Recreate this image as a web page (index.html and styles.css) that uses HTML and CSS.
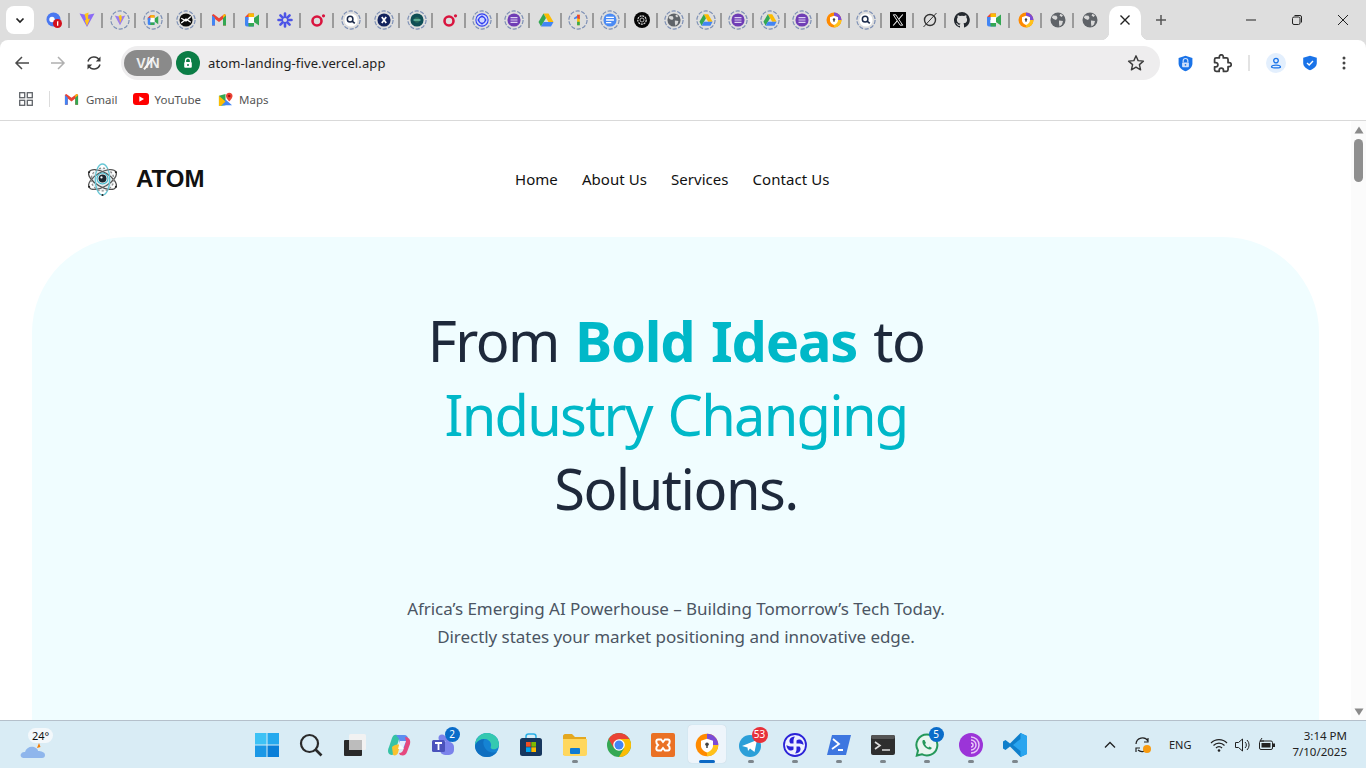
FILE: index.html
```html
<!DOCTYPE html>
<html lang="en">
<head>
<meta charset="utf-8">
<title>ATOM</title>
<link rel="stylesheet" href="styles.css">
</head>
<body>
<svg class="defs" width="0" height="0" aria-hidden="true">
  <defs>
    <symbol id="ring" viewBox="0 0 22 22"><circle cx="11" cy="11" r="10" fill="none" stroke="#7c8fb5" stroke-width="1.300" stroke-dasharray="4.600 1.700"/></symbol>
    <symbol id="meet" viewBox="0 0 16 16"><path d="M1 5 4.500 1.500H10V5H4.500V8H1Z" fill="#ea4335"/><path d="M1 8H4.500V11H10V14.500H3C1.900 14.500 1 13.600 1 12.500Z" fill="#4285f4"/><path d="M4.500 1.500H9C9.600 1.500 10 2 10 2.500V5H4.500Z" fill="#fbbc04"/><path d="M10 5V11H4.500V14.500H9C9.600 14.500 10 14 10 13.500V10L15 13.500V2.500L10 6Z" fill="#34a853"/><rect x="4.500" y="5" width="5.500" height="6" fill="#fff"/><path d="M1 5H4.500V8H1Z" fill="#4285f4"/></symbol>
    <symbol id="drive" viewBox="0 0 16 16"><path d="M5.500 1.500H10.500L15.500 10H10.500Z" fill="#fbbc04"/><path d="M5.500 1.500 .5 10 3 14.500 8 6Z" fill="#34a853"/><path d="M5.500 10H15.500L13 14.500H3Z" fill="#4285f4"/></symbol>
    <symbol id="listp" viewBox="0 0 16 16"><circle cx="8" cy="8" r="7.500" fill="#6f3db5"/><path d="M4 5.200H12M4 8H12M4 10.800H12" stroke="#dcd0f2" stroke-width="1.400"/></symbol>
    <symbol id="redo" viewBox="0 0 16 16"><circle cx="7" cy="9" r="4.500" fill="none" stroke="#d9143e" stroke-width="2.600"/><circle cx="13.500" cy="3.800" r="1.600" fill="#d9143e"/></symbol>
    <symbol id="globe" viewBox="0 0 16 16"><circle cx="8" cy="8" r="7.500" fill="#5f6368"/><path d="M3 3.500 6.500 3.800 7.500 6 6 8 3.500 7 1.800 5.500ZM9 8.500 13 9 12 12.500 9.500 14.500 9 11.500Z M10.500 1.800 13 3.500 11.500 5 9.500 3.500Z" fill="#d9d9d9"/></symbol>
    <symbol id="lens" viewBox="0 0 16 16"><circle cx="8" cy="8" r="7.500" fill="#fff"/><circle cx="7" cy="7" r="3.200" fill="none" stroke="#1b2a4a" stroke-width="1.700"/><path d="M9.300 9.300 12.300 11.800" stroke="#1b2a4a" stroke-width="2"/></symbol>
    <symbol id="shield" viewBox="0 0 16 16"><circle cx="8" cy="8" r="7.500" fill="#ff8a00"/><path d="M8 .5A7.500 7.500 0 0 1 15.500 8H12A4 4 0 0 0 8 4Z" fill="#7b4bd6"/><path d="M15.500 8A7.500 7.500 0 0 1 8 15.500V12A4 4 0 0 0 12 8Z" fill="#ffc21a"/><path d="M8 3.800 12 5.200V8.500C12 10.700 10 12.300 8 13 6 12.300 4 10.700 4 8.500V5.200Z" fill="#fff"/><circle cx="8" cy="7.500" r="1.200" fill="#444"/><path d="M7.500 8H8.500V10H7.500Z" fill="#444"/></symbol>
  </defs>
</svg>

<div class="tabstrip">
  <button class="tab-menu" aria-label="Tabs"><svg viewBox="0 0 12 12" class="i12"><path d="M2.500 4.500 6 8 9.500 4.500" fill="none" stroke="#222" stroke-width="1.700"/></svg></button>
  <div class="tabs">
    <span class="fav"><svg viewBox="0 0 16 16" class="i16"><circle cx="7.500" cy="7.500" r="7" fill="#4a78f0"/><circle cx="6" cy="7.500" r="2.700" fill="#fff"/><circle cx="11.500" cy="11.500" r="4.500" fill="#d3101c"/><path d="M11 9.500 12.300 9V13.800H11Z" fill="#fff"/></svg></span>
    <span class="fav"><svg viewBox="0 0 16 16" class="i16"><path d="M.5 1.500 8 3 15.500 1.500 8 15Z" fill="#8c6bf5"/><path d="M9.500 .5 5.500 2 7 7.500 5.800 8.500 8 14 11 6.500 9 7Z" fill="#ffc517"/></svg></span>
    <span class="fav ring"><svg class="r22"><use href="#ring"/></svg><svg viewBox="0 0 16 16" class="in12"><path d="M1 2 8 3.500 15 2 8 15Z" fill="#9b7cf0"/><path d="M9.500 1 6 2.500 7.500 8 8 12 10.500 6Z" fill="#ffc517"/></svg></span>
    <span class="fav ring"><svg class="r22"><use href="#ring"/></svg><svg class="in12"><use href="#meet"/></svg></span>
    <span class="fav ring"><svg class="r22"><use href="#ring"/></svg><svg viewBox="0 0 16 16" class="in16"><circle cx="8" cy="8" r="7.500" fill="#0b0b0b"/><path d="M2.500 6 8 9 13.500 4M2.500 11.500 8 7 13.500 10.500" stroke="#fff" stroke-width="1.500" fill="none"/></svg></span>
    <span class="fav"><svg class="i16" viewBox="0 0 16 16"><path d="M1 3V13.500H4V7L8 10 12 7V13.500H15V3L13.500 2 8 6.200 2.500 2Z" fill="#ea4335"/><path d="M1 3.200V13.500H4V6Z" fill="#4285f4"/><path d="M15 3.200V13.500H12V6Z" fill="#34a853"/><path d="M12 6 15 3.200 13.500 2 12 3.200Z" fill="#fbbc04"/></svg></span>
    <span class="fav"><svg class="i16"><use href="#meet"/></svg></span>
    <span class="fav"><svg class="i16" viewBox="0 0 16 16"><g stroke="#4d55e6" stroke-width="2.600" stroke-linecap="round"><path d="M8 1.500V14.500M1.500 8H14.500M3.400 3.400 12.600 12.600M12.600 3.400 3.400 12.600"/></g><circle cx="8" cy="8" r="2" fill="#dedede"/></svg></span>
    <span class="fav"><svg class="i16"><use href="#redo"/></svg></span>
    <span class="fav ring"><svg class="r22"><use href="#ring"/></svg><svg class="in16"><use href="#lens"/></svg></span>
    <span class="fav ring"><svg class="r22"><use href="#ring"/></svg><svg viewBox="0 0 16 16" class="in16"><circle cx="8" cy="8" r="7.500" fill="#13235e"/><path d="M5.500 4.500 10.500 11.500M10.500 4.500 5.500 11.500" stroke="#fff" stroke-width="2" fill="none"/></svg></span>
    <span class="fav ring"><svg class="r22"><use href="#ring"/></svg><svg viewBox="0 0 16 16" class="in16"><circle cx="8" cy="8" r="7.500" fill="#0f4f55"/><circle cx="8" cy="8" r="3.200" fill="#2b6a5c"/><path d="M4 8H12" stroke="#9fd" stroke-width="1"/></svg></span>
    <span class="fav"><svg class="i16"><use href="#redo"/></svg></span>
    <span class="fav ring"><svg class="r22"><use href="#ring"/></svg><svg viewBox="0 0 16 16" class="in16"><circle cx="8" cy="8" r="7" fill="#cfd6ff" stroke="#2f3df0" stroke-width="1.200"/><path d="M3.500 8C6 3 10 3 12.500 8 10 13 6 13 3.500 8ZM8 3.500C3 6 3 10 8 12.500 13 10 13 6 8 3.500Z" fill="none" stroke="#2f3df0" stroke-width="1.200"/></svg></span>
    <span class="fav ring"><svg class="r22"><use href="#ring"/></svg><svg class="in16"><use href="#listp"/></svg></span>
    <span class="fav"><svg class="i16"><use href="#drive"/></svg></span>
    <span class="fav ring"><svg class="r22"><use href="#ring"/></svg><svg viewBox="0 0 16 16" class="in16"><path d="M7 2H10V14H7Z" fill="#fbbc04"/><path d="M7 2H10V7L7 6Z" fill="#ea4335"/><path d="M3.500 5.500 7 3V6L3.500 7Z" fill="#4285f4"/><path d="M7 10H10V14H7Z" fill="#34a853"/></svg></span>
    <span class="fav ring"><svg class="r22"><use href="#ring"/></svg><svg viewBox="0 0 16 16" class="in16"><circle cx="8" cy="8" r="7.500" fill="#4a8af4"/><path d="M3.500 5H12.500M3.500 8H12.500M3.500 11H9.500" stroke="#fff" stroke-width="1.500"/></svg></span>
    <span class="fav"><svg viewBox="0 0 16 16" class="i16"><circle cx="8" cy="8" r="8" fill="#050505"/><circle cx="8" cy="8" r="4.200" fill="none" stroke="#ddd" stroke-width="1.200" stroke-dasharray="2 .8"/><circle cx="8" cy="8" r="2" fill="none" stroke="#ddd" stroke-width=".8"/></svg></span>
    <span class="fav ring"><svg class="r22"><use href="#ring"/></svg><svg class="in16"><use href="#globe"/></svg></span>
    <span class="fav ring"><svg class="r22"><use href="#ring"/></svg><svg class="in16"><use href="#drive"/></svg></span>
    <span class="fav ring"><svg class="r22"><use href="#ring"/></svg><svg class="in16"><use href="#listp"/></svg></span>
    <span class="fav ring"><svg class="r22"><use href="#ring"/></svg><svg class="in16"><use href="#drive"/></svg></span>
    <span class="fav ring"><svg class="r22"><use href="#ring"/></svg><svg class="in16"><use href="#listp"/></svg></span>
    <span class="fav"><svg class="i16"><use href="#shield"/></svg></span>
    <span class="fav ring"><svg class="r22"><use href="#ring"/></svg><svg class="in16"><use href="#lens"/></svg></span>
    <span class="fav"><svg viewBox="0 0 16 16" class="i16"><rect width="16" height="16" fill="#000"/><path d="M12.800 2.500 3.200 13.500" stroke="#fff" stroke-width="1.100"/><path d="M3.300 2.800H5.800L12.700 13.200H10.200Z" fill="#000" stroke="#fff" stroke-width=".9"/></svg></span>
    <span class="fav"><svg viewBox="0 0 16 16" class="i16"><circle cx="8" cy="8" r="5.500" fill="none" stroke="#333" stroke-width="1.400"/><path d="M1.500 15 14.500 1" stroke="#333" stroke-width="1"/></svg></span>
    <span class="fav"><svg viewBox="0 0 16 16" class="i16"><path d="M8 0a8 8 0 0 0-2.500 15.600c.4.100.5-.2.500-.4v-1.400c-2.200.5-2.700-1-2.700-1-.4-.9-.9-1.200-.9-1.200-.7-.5.100-.5.100-.5.800.1 1.200.8 1.200.8.700 1.200 1.900.9 2.300.7.100-.5.300-.9.500-1.100-1.800-.2-3.600-.9-3.600-4 0-.9.300-1.600.8-2.100-.1-.2-.4-1 .1-2.100 0 0 .7-.2 2.200.8a7.500 7.500 0 0 1 4 0c1.500-1 2.200-.8 2.200-.8.400 1.100.2 1.900.1 2.100.5.600.8 1.300.8 2.100 0 3.100-1.900 3.700-3.700 3.900.3.300.6.800.6 1.500v2.200c0 .2.100.5.600.4A8 8 0 0 0 8 0Z" fill="#24292f"/></svg></span>
    <span class="fav"><svg class="i16"><use href="#meet"/></svg></span>
    <span class="fav"><svg class="i16"><use href="#shield"/></svg></span>
    <span class="fav"><svg class="i16"><use href="#globe"/></svg></span>
    <span class="fav last"><svg class="i16"><use href="#globe"/></svg></span>
    <span class="tab-active"><svg viewBox="0 0 12 12" class="i12"><path d="M1.500 1.500 10.500 10.500M10.500 1.500 1.500 10.500" stroke="#222" stroke-width="1.400"/></svg></span>
    <span class="tab-new"><svg viewBox="0 0 12 12" class="i12"><path d="M6 1V11M1 6H11" stroke="#555" stroke-width="1.500"/></svg></span>
  </div>
  <div class="winctl">
    <svg viewBox="0 0 12 12" class="i12"><path d="M1 6H11" stroke="#222"/></svg>
    <svg viewBox="0 0 12 12" class="i12"><rect x="1.500" y="3" width="7.500" height="7.500" rx="1.500" fill="none" stroke="#222"/><path d="M3.500 1.500H9A1.500 1.500 0 0 1 10.500 3V8.500" fill="none" stroke="#222"/></svg>
    <svg viewBox="0 0 12 12" class="i12"><path d="M1 1 11 11M11 1 1 11" stroke="#222"/></svg>
  </div>
</div>

<div class="toolbar">
  <div class="navbtns">
    <svg viewBox="0 0 16 16" class="i16"><path d="M15 8H2M8 2 2 8 8 14" fill="none" stroke="#4a4a4a" stroke-width="1.500"/></svg>
    <svg viewBox="0 0 16 16" class="i16"><path d="M1 8H14M8 2 14 8 8 14" fill="none" stroke="#b0b0b0" stroke-width="1.500"/></svg>
    <svg viewBox="0 0 16 16" class="i16"><path d="M2 6.500A6.200 6.200 0 0 1 13.500 5.500M14 9.500A6.200 6.200 0 0 1 2.500 10.500" fill="none" stroke="#3c3c3c" stroke-width="1.500"/><path d="M14.500 1.500V6.500H9.800ZM1.500 14.500V9.500H6.200Z" fill="#3c3c3c"/></svg>
  </div>
  <div class="omnibox">
    <span class="vpn">V/N</span>
    <span class="lock"><svg viewBox="0 0 12 12" class="i12"><path d="M3.500 5V3.700a2.500 2.500 0 0 1 5 0V5" fill="none" stroke="#fff" stroke-width="1.300"/><rect x="2.200" y="5" width="7.600" height="5.800" rx="1" fill="#fff"/><circle cx="6" cy="7.900" r="1" fill="#0b7d46"/></svg></span>
    <span class="url">atom-landing-five.vercel.app</span>
    <svg viewBox="0 0 18 18" class="star"><path d="M9 1.800 11.100 6.600 16.400 7.100 12.400 10.600 13.600 15.800 9 13.100 4.400 15.800 5.600 10.600 1.600 7.100 6.900 6.600Z" fill="none" stroke="#3c3c3c" stroke-width="1.400" stroke-linejoin="round"/></svg>
  </div>
  <div class="exts">
    <svg viewBox="0 0 16 16" class="i16 e1"><path d="M8 .8 14.500 2.800V8C14.500 11.500 11.500 14 8 15.300 4.500 14 1.500 11.500 1.500 8V2.800Z" fill="#1a73e8"/><path d="M5.800 7V5.500a2.200 2.200 0 0 1 4.400 0V7" fill="none" stroke="#cfe0fb" stroke-width="1.100"/><rect x="4.800" y="7" width="6.400" height="4.500" rx=".8" fill="#cfe0fb"/><circle cx="8" cy="9.200" r=".8" fill="#1a73e8"/></svg>
    <svg viewBox="0 0 24 24" class="puzzle"><path d="M20.500 11H19V7c0-1.100-.9-2-2-2h-4V3.500C13 2.120 11.880 1 10.500 1S8 2.120 8 3.500V5H4c-1.100 0-1.990.9-1.990 2v3.800H3.500c1.490 0 2.700 1.210 2.700 2.700s-1.210 2.700-2.700 2.700H2V20c0 1.100.9 2 2 2h3.800v-1.500c0-1.490 1.210-2.700 2.700-2.700 1.490 0 2.700 1.210 2.700 2.700V22H17c1.100 0 2-.9 2-2v-4h1.500c1.380 0 2.500-1.120 2.500-2.500S21.880 11 20.500 11z" fill="none" stroke="#3c3c3c" stroke-width="2.200" stroke-linejoin="round"/></svg>
    <span class="tsep"></span>
    <span class="avatar"><svg viewBox="0 0 12 12" class="i12"><circle cx="6" cy="3.600" r="2.300" fill="none" stroke="#1a73e8" stroke-width="1.300"/><path d="M1.500 10C1.500 7.500 10.500 7.500 10.500 10 10.500 11.200 1.500 11.200 1.500 10Z" fill="none" stroke="#1a73e8" stroke-width="1.300"/></svg></span>
    <svg viewBox="0 0 16 16" class="i16 e2"><path d="M8 .8 14.800 2.800V8C14.800 11.500 11.500 14 8 15.300 4.500 14 1.200 11.500 1.200 8V2.800Z" fill="#1a73e8"/><path d="M5 8 7.200 10 11 6" fill="none" stroke="#fff" stroke-width="1.400"/></svg>
    <svg viewBox="0 0 4 16" class="kebab"><circle cx="2" cy="3" r="1.500" fill="#444"/><circle cx="2" cy="8" r="1.500" fill="#444"/><circle cx="2" cy="13" r="1.500" fill="#444"/></svg>
  </div>
</div>

<div class="bookmarks">
  <svg viewBox="0 0 14 14" class="apps"><g fill="none" stroke="#5f6368" stroke-width="1.300"><rect x=".7" y=".7" width="5" height="5"/><rect x="8.300" y=".7" width="5" height="5"/><rect x=".7" y="8.300" width="5" height="5"/><rect x="8.300" y="8.300" width="5" height="5"/></g></svg>
  <span class="bsep"></span>
  <span class="bm bm-gmail"><svg class="bi" viewBox="0 0 16 16"><path d="M1 3V13.500H4V7L8 10 12 7V13.500H15V3L13.500 2 8 6.200 2.500 2Z" fill="#ea4335"/><path d="M1 3.200V13.500H4V6Z" fill="#4285f4"/><path d="M15 3.200V13.500H12V6Z" fill="#34a853"/><path d="M12 6 15 3.200 13.500 2 12 3.200Z" fill="#fbbc04"/></svg>Gmail</span>
  <span class="bm"><svg class="bi yt" viewBox="0 0 16 12"><rect width="16" height="12" rx="3" fill="#f00"/><path d="M6.300 3.300 11 6 6.300 8.700Z" fill="#fff"/></svg>YouTube</span>
  <span class="bm"><svg class="bi maps" viewBox="0 0 16 16"><path d="M1 4 8 2V14L1 15Z" fill="#34a853"/><path d="M8 8 15 14H3Z" fill="#4285f4"/><path d="M1 4 8 10 3 15H1Z" fill="#fbbc04"/><path d="M12 .8C9.800.8 8.500 2.500 8.500 4.200 8.500 6.500 12 10 12 10S15.500 6.500 15.500 4.200C15.500 2.500 14.200.8 12 .8Z" fill="#ea4335"/><circle cx="12" cy="4.200" r="1.300" fill="#a50e0e"/></svg>Maps</span>
</div>

<div class="viewport">
  <main class="page">
    <header class="site-head">
      <a class="logo">
        <svg viewBox="0 0 32 32" class="atom">
          <circle cx="16" cy="16" r="11" fill="#e9eef0"/>
          <g fill="none" stroke-width="1.300">
            <ellipse cx="16" cy="16" rx="15" ry="7" stroke="#4f4f4f" transform="rotate(30 16 16)"/>
            <ellipse cx="16" cy="16" rx="15" ry="7" stroke="#5a5a5a" transform="rotate(-30 16 16)"/>
            <ellipse cx="16" cy="16" rx="15" ry="7" stroke="#67c7d6" transform="rotate(90 16 16)"/>
            <circle cx="16" cy="16" r="11" stroke="#8d8d8d" stroke-dasharray="2 2"/>
          </g>
          <circle cx="16" cy="15" r="3.800" fill="#1b2730"/><circle cx="16" cy="15" r="5.300" fill="none" stroke="#37b7cc"/><circle cx="15" cy="14" r="1.100" fill="#fff"/>
          <g fill="#222"><circle cx="3" cy="9" r="1"/><circle cx="29" cy="9" r="1"/><circle cx="3" cy="23" r="1"/><circle cx="29" cy="23" r="1"/><circle cx="16" cy="31" r="1"/></g>
        </svg>
        <span class="logo-word">ATOM</span>
      </a>
      <nav class="site-nav"><a>Home</a><a>About Us</a><a>Services</a><a>Contact Us</a></nav>
    </header>
    <section class="hero">
      <h1>From <b class="accent">Bold Ideas</b> to<br><span class="accent-light">Industry Changing</span><br>Solutions.</h1>
      <p>Africa’s Emerging AI Powerhouse – Building Tomorrow’s Tech Today.<br>Directly states your market positioning and innovative edge.</p>
    </section>
  </main>
  <div class="scrollbar">
    <svg viewBox="0 0 10 8" class="sarrow"><path d="M5 .5 9.500 7.500H.5Z" fill="#8a8a8a"/></svg>
    <span class="thumb"></span>
    <svg viewBox="0 0 10 8" class="sarrow down"><path d="M5 7.500 9.500 .5H.5Z" fill="#8a8a8a"/></svg>
  </div>
</div>

<footer class="taskbar">
  <div class="tb-left">
    <span class="weather"><svg viewBox="0 0 26 20" class="cloud"><path d="M19 4 20.500 8 17 9Z" fill="#f57c00"/><path d="M4 19C1 19 0 16.500 1 15 2 13 4 13 5 13 6 9 10 7 14 8 17 9 18 11 18 12 21 12 25 13 25 16 25 18 24 19 22 19Z" fill="#8fb6ec"/></svg><span class="temp">24°</span></span>
  </div>
  <div class="tb-center">
    <span class="tb"><svg viewBox="0 0 24 24" class="t24"><rect x="0" y="0" width="11.500" height="11.500" fill="#3ec2f5"/><rect x="12.500" y="0" width="11.500" height="11.500" fill="#25a9ee"/><rect x="0" y="12.500" width="11.500" height="11.500" fill="#1b98e6"/><rect x="12.500" y="12.500" width="11.500" height="11.500" fill="#0a7fd8"/></svg></span>
    <span class="tb"><svg viewBox="0 0 24 24" class="t24"><circle cx="10.500" cy="10.500" r="8.500" fill="none" stroke="#2a2a2a" stroke-width="2.200"/><path d="M16.500 16.500 22.500 22.500" stroke="#2a2a2a" stroke-width="2.600"/></svg></span>
    <span class="tb"><svg viewBox="0 0 24 24" class="t24"><rect x="6" y="1" width="17" height="16" rx="1.500" fill="#f2f2f2"/><rect x="1" y="7" width="18" height="16" rx="1" fill="#2a2a2a"/><rect x="6" y="7" width="13" height="10" fill="#bcbcbc"/></svg></span>
    <span class="tb"><svg viewBox="0 0 24 24" class="t24"><path d="M5 22C1 22 0 18 2 14L5 5C6 2 8 1 10 2L13 3 8 19C7 21 6 22 5 22Z" fill="#36c3a5"/><path d="M5 14C7 12 10 11 13 12L11 20C10 22 8 23 6 22Z" fill="#f9c22e"/><path d="M9 2H17C20 2 21 4 21 6L18 16 13 12 12 6Z" fill="#5b8ef0"/><path d="M18 4C22 4 24 7 23 11L20 19C19 22 17 23 13 22L12 20C15 20 16 18 17 15L19 8Z" fill="#e5487e"/><path d="M13 8H19L16 16H11Z" fill="#fff" opacity=".85"/></svg></span>
    <span class="tb"><svg viewBox="0 0 24 24" class="t24"><circle cx="17" cy="6" r="3.500" fill="#7b83eb"/><circle cx="11" cy="5" r="3.500" fill="#7b83eb"/><rect x="9" y="9" width="14" height="13" rx="5" fill="#7b83eb"/><rect x="1" y="7" width="13" height="12" rx="1.500" fill="#4b53bc"/><path d="M4 10H11M7.500 10V17" stroke="#fff" stroke-width="1.800"/></svg><span class="badge blue">2</span></span>
    <span class="tb"><svg viewBox="0 0 24 24" class="t24"><circle cx="12" cy="12" r="12" fill="#1583d3"/><path d="M12 0C18.600 0 24 5 24 11.500 24 15.500 20 17 17 16 14.500 15 16.500 13.500 16 11 15.500 8 12.500 6 9.500 6 5 6 1 9 0 13 0 6 5 0 12 0Z" fill="#35c9b0"/><path d="M0 13C1 9 5 6 9.500 6 8 8 8 10.500 9 13 10.500 17.500 16 21 22 19 19 22.500 15.500 24 12 24 5 24 0 19 0 13Z" fill="#0f6fc0"/></svg></span>
    <span class="tb"><svg viewBox="0 0 24 24" class="t24"><path d="M7 6V3.500C7 2 8 1 9.500 1H14.500C16 1 17 2 17 3.500V6" fill="none" stroke="#2bb0e6" stroke-width="1.500"/><rect x="1" y="5" width="22" height="18" rx="2.500" fill="#17375e"/><rect x="7" y="9" width="4.700" height="4.700" fill="#f25022"/><rect x="12.300" y="9" width="4.700" height="4.700" fill="#7fba00"/><rect x="7" y="14.300" width="4.700" height="4.700" fill="#00a4ef"/><rect x="12.300" y="14.300" width="4.700" height="4.700" fill="#ffb900"/></svg></span>
    <span class="tb run"><svg viewBox="0 0 24 24" class="t24"><path d="M0 3C0 2 1 1 2 1H9L12 4H23V22H0Z" fill="#e4a820"/><path d="M0 6H24V21C24 22 23 23 22 23H2C1 23 0 22 0 21Z" fill="#ffd75e"/><rect x="7" y="15" width="10" height="6" rx="1" fill="#0e7bd3"/></svg></span>
    <span class="tb"><svg viewBox="0 0 24 24" class="t24"><circle cx="12" cy="12" r="12" fill="#34a853"/><path d="M12 0A12 12 0 0 1 22.400 6H12L6.800 15 1.600 6A12 12 0 0 1 12 0Z" fill="#ea4335"/><path d="M22.400 6A12 12 0 0 1 12 24L17.200 15 12 6Z" fill="#fbbc04"/><circle cx="12" cy="12" r="5.800" fill="#fff"/><circle cx="12" cy="12" r="4.500" fill="#4285f4"/></svg></span>
    <span class="tb"><svg viewBox="0 0 24 24" class="t24"><rect width="24" height="24" rx="2" fill="#ea7125"/><path d="M7 6.500H10L12 9 14 6.500H17C19 6.500 19.500 10 17 12 19.500 14 19 17.500 17 17.500H14L12 15 10 17.500H7C5 17.500 4.500 14 7 12 4.500 10 5 6.500 7 6.500Z" fill="none" stroke="#fff" stroke-width="2"/></svg></span>
    <span class="tb active"><svg class="t24"><use href="#shield"/></svg><span class="active-bar"></span></span>
    <span class="tb run"><svg viewBox="0 0 24 24" class="t24"><circle cx="11" cy="13" r="11" fill="#2b9fd8"/><path d="M3 13 18 7 15.500 19 11 15.500 9 18 8.500 14.500Z" fill="#fff"/></svg><span class="badge red">53</span></span>
    <span class="tb run"><svg viewBox="0 0 24 24" class="t24"><circle cx="12" cy="12" r="11" fill="#eef0ff" stroke="#2b22d8" stroke-width="1.800"/><path d="M12 3.500C7 3.500 5 8 7.500 10.500L10.500 10.500 10.500 7.500C10.500 5.500 12 3.500 12 3.500ZM20.500 12C20.500 7 16 5 13.500 7.500L13.500 10.500 16.500 10.500C18.500 10.500 20.500 12 20.500 12ZM12 20.500C17 20.500 19 16 16.500 13.500L13.500 13.500 13.500 16.500C13.500 18.500 12 20.500 12 20.500ZM3.500 12C3.500 17 8 19 10.500 16.500L10.500 13.500 7.500 13.500C5.500 13.500 3.500 12 3.500 12Z" fill="#2b22d8"/></svg></span>
    <span class="tb run"><svg viewBox="0 0 24 24" class="t24"><path d="M5 2H24L19 22H0Z" fill="#3d76e0"/><path d="M6 6 12 11 5 16M11 17H16" fill="none" stroke="#fff" stroke-width="1.800"/></svg></span>
    <span class="tb run"><svg viewBox="0 0 24 24" class="t24"><rect y="2" width="24" height="20" rx="2" fill="#2e2e2e"/><rect y="2" width="24" height="4" rx="2" fill="#555"/><path d="M4 9 9 12.500 4 16M11 17H19" fill="none" stroke="#ddd" stroke-width="1.600"/></svg></span>
    <span class="tb run"><svg viewBox="0 0 24 24" class="t24"><path d="M12 1.500A10.500 10.500 0 0 0 3 17.500L1.800 22.500 6.800 21.200A10.500 10.500 0 1 0 12 1.500Z" fill="#e9f6f0" stroke="#25985a" stroke-width="2"/><path d="M8 7C7 8 7 10 9 13 11 15.500 14 17 15.500 16.500L17 15 14.500 13.500 13.500 14.500C12 14 10.500 12.500 10 11L11 10 9.500 7Z" fill="#25985a"/></svg><span class="badge blue">5</span></span>
    <span class="tb run"><svg viewBox="0 0 24 24" class="t24"><circle cx="12" cy="12" r="12" fill="#9b34d8"/><path d="M12 4A8 8 0 0 1 12 20M12 7A5 5 0 0 1 12 17M12 10A2 2 0 0 1 12 14" fill="none" stroke="#e8c8f8" stroke-width="1.500"/></svg></span>
    <span class="tb run"><svg viewBox="0 0 24 24" class="t24"><path d="M17.500 0 24 3V21L17.500 24 7 13.500 2.500 17 0 15.500V8.500L2.500 7 7 10.500Z" fill="#0f7fcb"/><path d="M17.500 0 24 3V21L17.500 24ZM17.500 6 10 12 17.500 18Z" fill="#2aa5ef" fill-rule="evenodd"/></svg></span>
  </div>
  <div class="tray">
    <svg viewBox="0 0 12 12" class="tr-caret"><path d="M1 8.500 6 3.500 11 8.500" fill="none" stroke="#222" stroke-width="1.300"/></svg>
    <span class="sync"><svg viewBox="0 0 18 18" class="t18"><path d="M2 8A6.500 6.500 0 0 1 14 5M14 2V6H10M13 13A6 6 0 0 1 4 14M2 16V12H6" fill="none" stroke="#222" stroke-width="1.200"/><circle cx="13" cy="13" r="4" fill="#f79a0f"/></svg></span>
    <span class="lang">ENG</span>
    <span class="sys">
      <svg viewBox="0 0 18 16" class="t18w"><path d="M1 6A11 11 0 0 1 17 6M3.500 8.500A7.500 7.500 0 0 1 14.500 8.500M6 11A4 4 0 0 1 12 11" fill="none" stroke="#222" stroke-width="1.200"/><circle cx="9" cy="13.500" r="1.300" fill="#222"/></svg>
      <svg viewBox="0 0 18 16" class="t18w"><path d="M1.500 5.500H4.500L8.500 2V14L4.500 10.500H1.500Z" fill="none" stroke="#222"/><path d="M11 5A4 4 0 0 1 11 11M13 3A7 7 0 0 1 13 13" fill="none" stroke="#222"/></svg>
      <svg viewBox="0 0 18 16" class="t18w"><rect x="1.500" y="4" width="13" height="8.500" rx="1.500" fill="none" stroke="#222"/><rect x="3.500" y="6" width="9" height="4.500" fill="#222"/><rect x="15" y="6.500" width="2" height="3.500" fill="#222"/><path d="M4 1 2 4H6" fill="none" stroke="#222"/></svg>
    </span>
    <span class="clock"><span>3:14 PM</span><span>7/10/2025</span></span>
  </div>
</footer>
</body>
</html>
```

FILE: styles.css
```css
* { box-sizing: border-box; }
html, body { margin: 0; height: 100%; }
body {
  display: flex;
  flex-direction: column;
  height: 100vh;
  overflow: hidden;
  font-family: "Noto Sans", sans-serif;
  background: #dedede;
  color: #111;
}
svg { display: block; flex: none; }
.defs { position: absolute; }
.i12 { width: 12px; height: 12px; }
.i16 { width: 16px; height: 16px; }

/* tab strip */
.tabstrip {
  height: 40px;
  flex: none;
  background: #dedede;
  display: flex;
  padding-left: 6px;
}
.tab-menu {
  width: 28px; height: 28px;
  margin-top: 6px;
  border: 0; padding: 0;
  border-radius: 8px;
  background: #fff;
  display: flex; align-items: center; justify-content: center;
}
.tabs { display: flex; padding-left: 3px; }
.fav {
  width: 32px;
  height: 40px;
  position: relative;
  display: flex; align-items: center; justify-content: center;
}
.fav:nth-child(-n+13) { width: 33px; }
.fav::after {
  content: "";
  position: absolute;
  right: 0; top: 12.5px;
  width: 2px; height: 15px;
  background: #9b9b9b;
}
.fav.last::after { display: none; }
.r22 { width: 20px; height: 20px; position: absolute; left: calc(50% - 10px); top: 10px; }
.in16 { width: 14px; height: 14px; }
.in12 { width: 12px; height: 12px; }
.tab-active {
  position: relative;
  width: 32px; height: 34px;
  margin: 6px 0 0 3px;
  background: #fff;
  border-radius: 10px 10px 0 0;
  display: flex; align-items: center; justify-content: center;
  padding-bottom: 6px;
}
.tab-active::before,
.tab-active::after {
  content: "";
  position: absolute;
  bottom: 0;
  width: 8px; height: 8px;
}
.tab-active::before {
  left: -8px;
  background: radial-gradient(circle at 0 0, transparent 8px, #fff 8.5px);
}
.tab-active::after {
  right: -8px;
  background: radial-gradient(circle at 100% 0, transparent 8px, #fff 8.5px);
}
.tab-new { width: 40px; display: flex; align-items: center; justify-content: center; }
.winctl {
  margin-left: auto;
  display: flex; align-items: center;
  gap: 34px;
  padding-right: 17px;
}

/* toolbar */
.toolbar {
  height: 44px;
  flex: none;
  display: flex;
  background: #fff;
  border-radius: 8px 8px 0 0;
  padding-top: 6px;
}
.navbtns {
  display: flex;
  width: 121px;
  height: 34px;
  align-items: center;
  padding-left: 14px;
  gap: 20px;
}
.omnibox {
  width: 1039px;
  height: 34px;
  background: #eeedee;
  border-radius: 17px;
  display: flex;
  align-items: center;
  padding: 0 15px 0 3px;
}
.vpn {
  position: relative;
  width: 48px; height: 26px;
  background: #8a8a8a;
  border-radius: 13px;
  color: #eeeeee;
  font: bold 14px "Liberation Sans", sans-serif;
  display: flex; align-items: center; justify-content: center;
}
.vpn::after {
  content: "";
  position: absolute;
  left: 23.5px; top: 5px;
  width: 1.5px; height: 16px;
  background: #f6f6f6;
  transform: rotate(38deg);
}
.lock {
  width: 24px; height: 24px;
  margin-left: 4px;
  background: #0b7d46;
  border-radius: 50%;
  display: flex; align-items: center; justify-content: center;
}
.url { margin-left: 8px; font-size: 13px; letter-spacing: .11px; color: #222; }
.star { width: 18px; height: 18px; margin-left: auto; }
.exts { display: flex; align-items: center; height: 34px; }
.e1 { margin-left: 17px; width: 17px; height: 17px; }
.puzzle { width: 19px; height: 19px; margin-left: 19px; }
.tsep { width: 2px; height: 16px; background: #e3e3e3; margin-left: 16px; }
.avatar {
  width: 20px; height: 20px;
  margin-left: 16px;
  background: #e3effd;
  border-radius: 50%;
  display: flex; align-items: center; justify-content: center;
}
.e2 { margin-left: 16px; width: 16px; height: 16px; }
.kebab { width: 4px; height: 16px; margin-left: 24px; }

/* bookmarks */
.bookmarks {
  height: 37px;
  flex: none;
  background: #fff;
  border-bottom: 1px solid #d9d9d9;
  display: flex;
  align-items: center;
  padding-left: 19px;
  padding-bottom: 6px;
}
.apps { width: 14px; height: 14px; }
.bsep { width: 1px; height: 16px; background: #dcdcdc; margin: 0 14px 0 16px; }
.bm {
  display: flex; align-items: center;
  gap: 6px;
  font-size: 11.5px;
  color: #555;
  margin-right: 16px;
}
.bm-gmail { gap: 7px; margin-right: 15px; }
.bi { width: 15px; height: 15px; }
.yt { width: 16px; height: 12px; }
.maps { margin-left: 1px; }

/* page */
.viewport { flex: 1; min-height: 0; display: flex; overflow: hidden; }
.page { flex: 1; min-width: 0; background: #fff; overflow: hidden; }
.site-head {
  height: 116px;
  display: flex;
  align-items: center;
  padding-left: 86px;
}
.logo { display: flex; align-items: center; gap: 17px; width: 118px; }
.atom { width: 33px; height: 33px; }
.logo-word {
  font: bold 24px "Liberation Sans", sans-serif;
  color: #111;
}
.site-nav {
  display: flex;
  gap: 24px;
  margin-left: 311px;
  font-size: 15px;
  letter-spacing: .05px;
  color: #111;
}
.hero {
  margin: 0 32px;
  min-height: 620px;
  background: #f0fdff;
  border-radius: 96px 96px 0 0;
  padding: 66px 0 0 1px;
  text-align: center;
}
.hero h1 {
  margin: 0;
  font-size: 56px;
  font-weight: 400;
  line-height: 74px;
  letter-spacing: -1.5px;
  word-spacing: 3px;
  color: #1e293b;
}
.accent { color: #00b8c8; font-weight: 700; letter-spacing: -1.2px; }
.accent-light { color: #00b8c8; letter-spacing: -1.75px; }
.hero p {
  margin: 70px 0 0;
  font-size: 17px;
  letter-spacing: -.04px;
  line-height: 28px;
  color: #4b5563;
}
.scrollbar {
  width: 15px;
  flex: none;
  background: #fbfbfb;
  display: flex;
  flex-direction: column;
  align-items: center;
  padding-top: 5px;
  padding-bottom: 4px;
}
.sarrow { width: 10px; height: 8px; }
.sarrow.down { margin-top: auto; }
.thumb { width: 9px; height: 43px; margin-top: 5px; border-radius: 5px; background: #8f8f8f; }

/* taskbar */
.taskbar {
  height: 48px;
  flex: none;
  background: #d9ecf5;
  border-top: 1px solid #b5c0cb;
  display: grid;
  grid-template-columns: 244.5px auto 1fr;
  align-items: center;
}
.tb-left { padding-left: 20px; }
.weather { display: block; position: relative; width: 30px; height: 30px; }
.cloud { width: 26px; height: 20px; position: absolute; left: 0; top: 9px; }
.temp {
  position: absolute;
  left: 8px; top: -2px;
  padding: 0 4px;
  background: #f3f8fb;
  border-radius: 8px;
  font-size: 11px;
  color: #111;
}
.tb-center { display: flex; }
.tb {
  width: 44px; height: 47px;
  position: relative;
  display: flex; align-items: center; justify-content: center;
}
.t24 { width: 24px; height: 24px; }
.run::after {
  content: "";
  position: absolute;
  left: 19px; bottom: 5px;
  width: 6px; height: 3px;
  border-radius: 2px;
  background: #7d868c;
}
.active::before {
  content: "";
  position: absolute;
  left: 3px; top: 4px; right: 3px; bottom: 5px;
  background: #eef5fb;
  border-radius: 4px;
  box-shadow: 0 0 1px #b9c6d0;
}
.active > svg { position: relative; }
.active-bar {
  position: absolute;
  left: 14px; bottom: 5px;
  width: 16px; height: 3px;
  border-radius: 2px;
  background: #0a68c4;
}
.badge {
  position: absolute;
  top: 6px;
  left: 24px;
  min-width: 15px; height: 15px;
  border-radius: 8px;
  color: #fff;
  font-size: 10px;
  line-height: 15px;
  text-align: center;
}
.blue { background: #0a6cc9; }
.red { background: #e8313a; left: 23px; min-width: 16px; height: 16px; }
.tray { display: flex; align-items: center; padding-left: 67.5px; }
.tr-caret { width: 12px; height: 12px; }
.t18 { width: 18px; height: 18px; }
.sync { margin-left: 18px; }
.lang { margin-left: 17px; font-size: 11px; color: #222; }
.sys { display: flex; gap: 6px; margin-left: 19px; }
.t18w { width: 18px; height: 16px; }
.clock {
  margin-left: auto;
  padding: 0 19px 2px 0;
  display: flex;
  flex-direction: column;
  align-items: flex-end;
  font-size: 11.5px;
  line-height: 16px;
  color: #222;
}
```
